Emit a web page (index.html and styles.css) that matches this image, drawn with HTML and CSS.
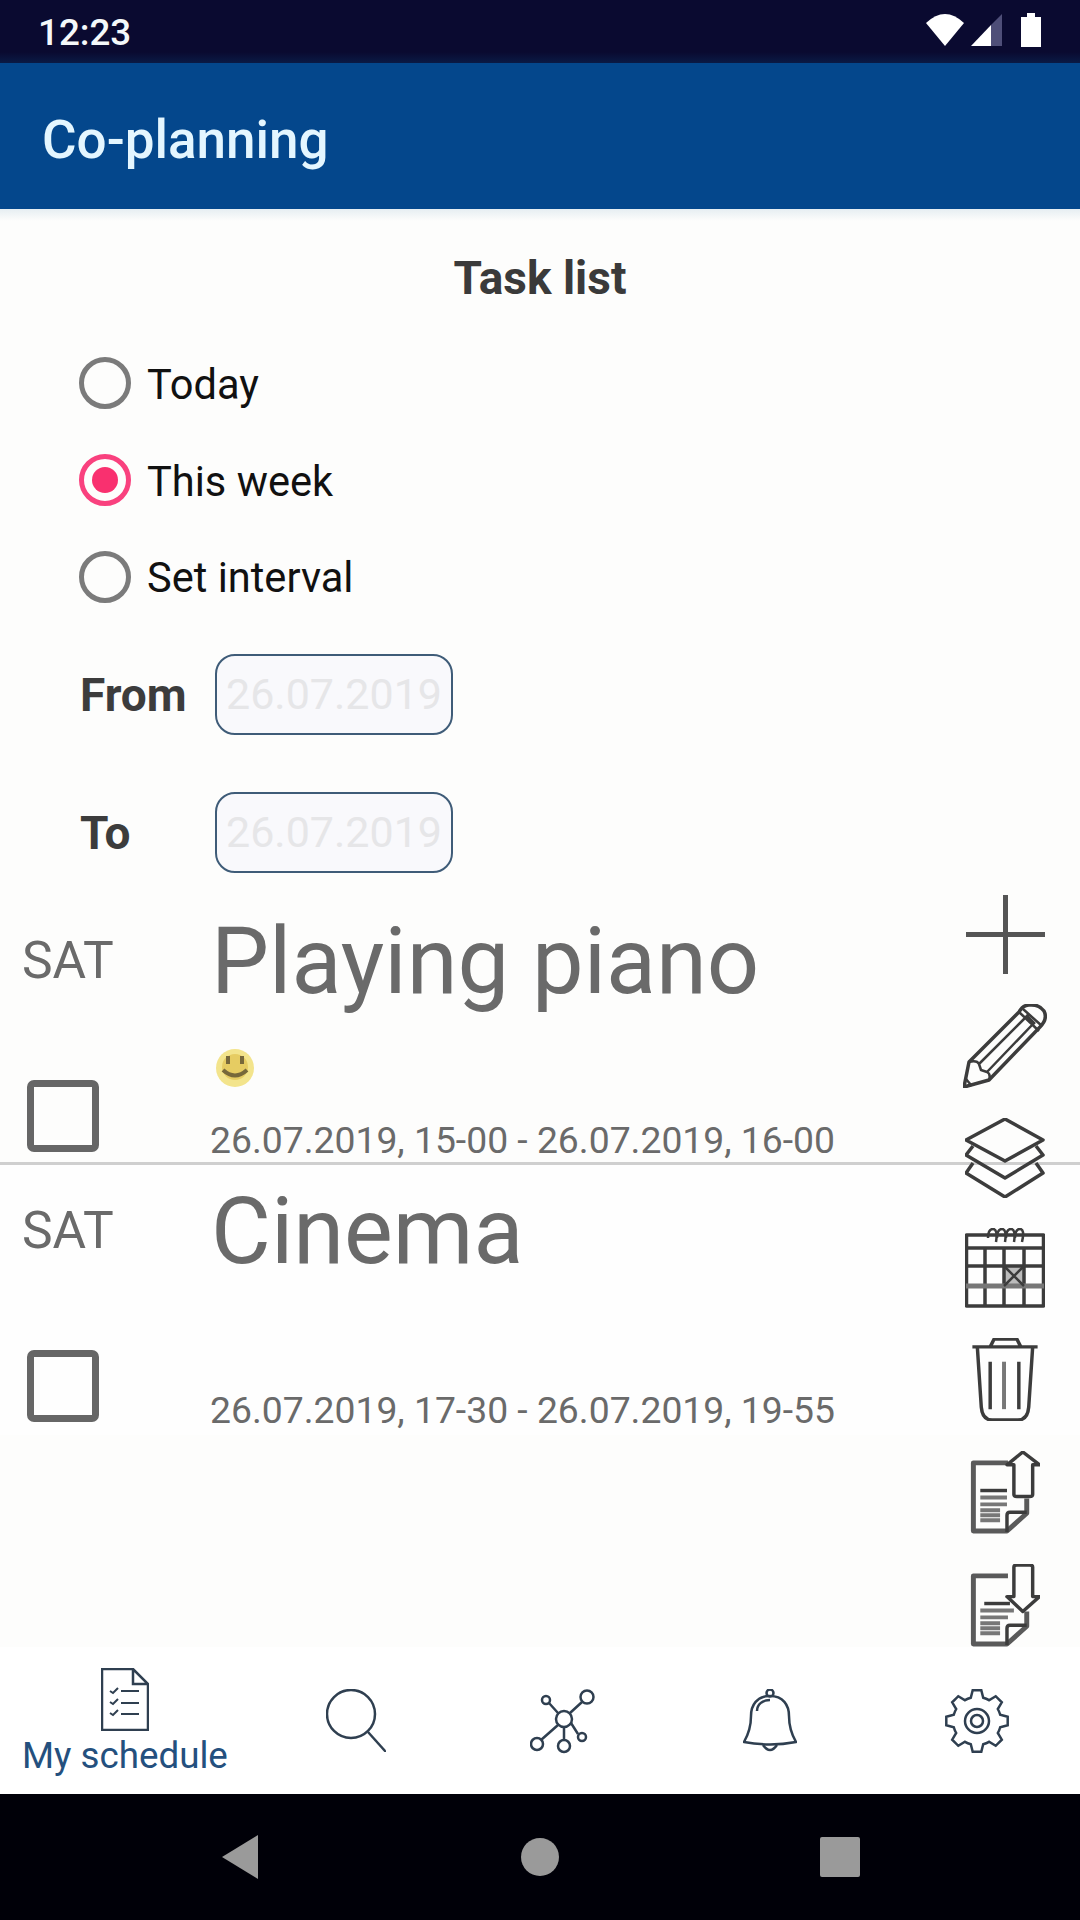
FILE: index.html
```html
<!DOCTYPE html>
<html lang="en">
<head>
 <meta charset="utf-8"/>
 <title>Co-planning</title>
 <link rel="stylesheet" href="styles.css">
</head>
<body>

<header class="statusbar">
 <span class="clock">12:23</span>
 <div class="status-icons">
  <svg class="ic-wifi" viewBox="0 0 38 32"><path d="M19 32 L0 9 Q19 -9 38 9 Z"/></svg>
  <svg class="ic-signal" viewBox="0 0 31 32"><path class="dim" d="M31 0 V32 H20 V11 Z"/><path d="M20 11 V32 H0 Z"/></svg>
  <svg class="ic-battery" viewBox="0 0 20 34"><path d="M6 0 H14 V4 H20 V34 H0 V4 H6 Z"/></svg>
 </div>
</header>

<div class="appbar">Co-planning</div>

<main class="page">
 <h2 class="page-title">Task list</h2>

 <div class="radios">
  <div class="radio-row"><span class="radio"></span><span>Today</span></div>
  <div class="radio-row"><span class="radio checked"></span><span>This week</span></div>
  <div class="radio-row"><span class="radio"></span><span>Set interval</span></div>
 </div>

 <div class="dates">
  <div class="date-row"><span class="date-label">From</span><div class="date-field">26.07.2019</div></div>
  <div class="date-row"><span class="date-label">To</span><div class="date-field">26.07.2019</div></div>
 </div>

 <div class="tasks">
  <div class="task divided">
   <div class="task-side">
    <span class="day">SAT</span>
    <span class="check"></span>
   </div>
   <div class="task-body">
    <div class="task-title">Playing piano</div>
    <svg class="smiley" viewBox="0 0 40 40">
     <circle cx="20" cy="20" r="19" fill="#f3e48c"/>
     <circle cx="20" cy="19" r="13" fill="#e6cc62"/>
     <path d="M13 8 V16 M27 8 V16" stroke="#77683a" stroke-width="4" fill="none"/>
     <path d="M8 22 Q20 33 32 22" stroke="#77683a" stroke-width="4" fill="none"/>
    </svg>
    <div class="task-time">26.07.2019, 15-00 - 26.07.2019, 16-00</div>
   </div>
  </div>
  <div class="task">
   <div class="task-side">
    <span class="day">SAT</span>
    <span class="check"></span>
   </div>
   <div class="task-body">
    <div class="task-title">Cinema</div>
    <div class="task-time">26.07.2019, 17-30 - 26.07.2019, 19-55</div>
   </div>
  </div>
 </div>

 <div class="tools">
  <svg class="t-plus" viewBox="0 0 79 79"><path d="M39.5 0 V79 M0 39.5 H79"/></svg>
  <svg class="t-pencil" viewBox="0 0 84 84">
   <path d="M1 83 L6 58 L56 8 Q60 1 66 1 Q76 0 81 7 Q85 15 77 23 L26 76 Z"/>
   <path class="thin" d="M56 8 L76 27 M60 5 L79 22 M63 11 L72 20 M6 58 Q14 56 16 60 L18 66 L24 68 Q28 70 26 76 M16 60 L62 14 M24 68 L70 20 M1 83 L8 81 L3 75"/>
  </svg>
  <svg class="t-layers" viewBox="0 0 80 80">
   <path d="M40 1 L78 22 L40 43 L1 22 Z"/>
   <path d="M8 28 L1 37 L40 60 L78 37 L71 28"/>
   <path d="M8 45 L1 55 L40 79 L78 55 L71 45"/>
  </svg>
  <svg class="t-calendar" viewBox="0 0 80 80">
   <path class="cell" d="M39 38 H59 V58 H39 Z"/>
   <rect x="1.5" y="7" width="77" height="71"/>
   <path d="M1 20 H79 M1 38 H79 M20 20 V79 M39 20 V79 M59 20 V79"/>
   <path class="thick" d="M1 58 H79"/>
   <path class="thin" d="M39 38 L59 58 M59 38 L39 58"/>
   <path class="thin" d="M23 10 Q23 1 28 1 Q33 1 31 14 M32 10 Q32 1 37 1 Q42 1 40 14 M41 10 Q41 1 46 1 Q51 1 49 14 M50 10 Q50 1 55 1 Q60 1 57 14"/>
  </svg>
  <svg class="t-trash" viewBox="0 0 66 84">
   <path d="M18 9 L22 1 H45 L49 9 M0 9 H66"/>
   <path d="M5 9 L9 70 Q10 83 20 83 H46 Q56 83 57 70 L61 9"/>
   <path d="M18 24 V72 M47 24 V72"/>
   <path class="grey" d="M32 24 V72"/>
  </svg>
  <svg class="t-doc" viewBox="0 0 70 84">
   <path class="wide" d="M38 12 H3 V81 H37 L57 63 V48"/>
   <path d="M37 82 V65 Q37 62 40 62 H57"/>
   <path d="M10 40 H37"/>
   <path class="grey" d="M10 47 H37 M10 54 H37 M10 60 H30 M10 65 H30 M10 70 H30"/>
   <path d="M44 44 V14 H37 L53 1 L70 14 H63 V44 Q63 46 60 46 H47 Q44 46 44 44 Z"/>
  </svg>
  <svg class="t-doc" viewBox="0 0 70 84">
   <path class="wide" d="M38 12 H3 V81 H37 L57 63 V48"/>
   <path d="M37 82 V65 Q37 62 40 62 H57"/>
   <path d="M14 40 H40"/>
   <path class="grey" d="M10 47 H44 M10 54 H38 M10 60 H30 M10 65 H30 M10 70 H30"/>
   <path d="M44 3 Q44 1 47 1 H60 Q63 1 63 3 V33 H70 L53 48 L37 33 H44 Z"/>
  </svg>
 </div>
</main>

<nav class="bottomnav">
 <div class="nav-item active">
  <svg class="n-doc" viewBox="0 0 48 63">
   <path d="M1 1 H32 L47 16 V62 H1 Z M32 1 V16 H47"/>
   <path class="fine" d="M9 23 L12 25 L17 20 M20 23 H38 M9 34 L12 36 L17 31 M20 35 H38 M9 45 L12 47 L17 42 M20 46 H38"/>
  </svg>
  <span class="nav-label">My schedule</span>
 </div>
 <div class="nav-item">
  <svg class="n-search" viewBox="0 0 60 63"><circle cx="25" cy="25" r="24"/><path d="M42 43 L60 63"/></svg>
 </div>
 <div class="nav-item">
  <svg class="n-net" viewBox="0 0 66 66">
   <circle cx="34" cy="30" r="8"/><circle cx="57" cy="8" r="6.5"/><circle cx="16" cy="11" r="4"/>
   <circle cx="52" cy="48" r="4"/><circle cx="34" cy="57" r="6"/><circle cx="7" cy="55" r="6"/>
   <path d="M40 24 L52 13 M28 24 L19 14 M41 34 L48 45 M34 38 V51 M28 36 L11 51"/>
  </svg>
 </div>
 <div class="nav-item">
  <svg class="n-bell" viewBox="0 0 54 63">
   <circle cx="27" cy="4" r="3.5"/>
   <path d="M27 7 C14 7 8 16 8 27 C8 38 5 46 1 53 Q27 58 53 53 C49 46 46 38 46 27 C46 16 40 7 27 7 Z"/>
   <path d="M14 22 C14 15 20 11 27 11"/>
   <path d="M20 56 Q27 66 34 56"/>
  </svg>
 </div>
 <div class="nav-item">
  <svg class="n-gear" viewBox="0 0 64 64">
   <path d="M25.8 8.8 L27.7 1.3 H36.3 L38.2 8.8 A24 24 0 0 1 44 11.2 L50.7 7.2 L56.8 13.3 L52.8 20 A24 24 0 0 1 55.2 25.8 L62.7 27.7 V36.3 L55.2 38.2 A24 24 0 0 1 52.8 44 L56.8 50.7 L50.7 56.8 L44 52.8 A24 24 0 0 1 38.2 55.2 L36.3 62.7 H27.7 L25.8 55.2 A24 24 0 0 1 20 52.8 L13.3 56.8 L7.2 50.7 L11.2 44 A24 24 0 0 1 8.8 38.2 L1.3 36.3 V27.7 L8.8 25.8 A24 24 0 0 1 11.2 20 L7.2 13.3 L13.3 7.2 L20 11.2 A24 24 0 0 1 25.8 8.8 Z"/>
   <circle cx="32" cy="32" r="12"/><circle cx="32" cy="32" r="6"/>
  </svg>
 </div>
</nav>

<footer class="navbar">
 <svg viewBox="0 0 40 44"><path d="M38 0 V44 L2 22 Z"/></svg>
 <svg viewBox="0 0 40 44"><circle cx="20" cy="22" r="19"/></svg>
 <svg viewBox="0 0 40 44"><rect x="0" y="2" width="40" height="40" rx="2"/></svg>
</footer>

</body>
</html>
```

FILE: styles.css
```css
* { box-sizing: border-box; }
body {
  margin: 0;
  width: 1080px;
  height: 1920px;
  display: flex;
  flex-direction: column;
  overflow: hidden;
  font-family: Roboto, "Liberation Sans", sans-serif;
  background: #fdfdfc;
}

/* top bars */
.statusbar {
  height: 63px;
  flex: none;
  display: flex;
  justify-content: space-between;
  align-items: flex-start;
  padding: 13px 39px 0 38px;
  background: linear-gradient(#0a0a30 52px, #0a1a45);
  color: #f4f8fa;
}
.clock { font-size: 36.75px; font-weight: 500; line-height: 40px; }
.status-icons { display: flex; gap: 7px; margin-top: 1px; }
.status-icons svg { fill: #fff; display: block; }
.ic-wifi { width: 38px; height: 32px; }
.ic-signal { width: 31px; height: 32px; margin-right: 12px; }
.ic-signal .dim { fill: #4e4e78; }
.ic-battery { width: 20px; height: 34px; margin-top: -1px; }

.appbar {
  height: 146px;
  flex: none;
  padding: 47px 0 0 42px;
  background: #04478c;
  color: #e4f6ff;
  font-size: 53px;
  font-weight: 500;
  line-height: 60px;
}

/* page body */
.page {
  position: relative;
  flex: 1;
  background: linear-gradient(#e6eef2, #fdfdfc 12px);
}
.page-title {
  margin: 0;
  height: 126px;
  padding-top: 44px;
  text-align: center;
  font-size: 46px;
  font-weight: 700;
  line-height: 50px;
  color: #3a3a3a;
}

.radio-row {
  height: 96.7px;
  display: flex;
  align-items: center;
  gap: 17px;
  padding: 0 0 0 79px;
  font-size: 41.6px;
  color: #111;
}
.radio-row span:last-child { margin: 2px 0 0 -1px; }
.radio {
  width: 52px;
  height: 52px;
  border: 5px solid #7b7b7b;
  border-radius: 50%;
  display: flex;
  align-items: center;
  justify-content: center;
}
.radio.checked { border-color: #f9417e; }
.radio.checked::after {
  content: "";
  width: 26px;
  height: 26px;
  border-radius: 50%;
  background: #f9306f;
}

.dates {
  margin-top: 29px;
  display: flex;
  flex-direction: column;
  gap: 57px;
}
.date-row { display: flex; align-items: center; padding-left: 80px; }
.date-label {
  width: 135px;
  font-size: 46px;
  font-weight: 700;
  color: #3c3c3c;
}
.date-field {
  width: 238px;
  height: 81px;
  border: 2.5px solid #3f5c78;
  border-radius: 20px;
  background: #f9f9fc;
  color: #e6e6e8;
  font-size: 43px;
  line-height: 76px;
  text-align: center;
}

/* tasks */
.tasks { margin-top: 22px; }
.task {
  height: 270px;
  display: flex;
  color: #6a6a6a;
}
.task.divided { border-bottom: 3px solid #cfcfcf; }
.task + .task { background: #fefefe; }
.task-side {
  width: 210px;
  flex: none;
  display: flex;
  flex-direction: column;
  align-items: flex-start;
  padding: 42px 0 10px 22px;
}
.day { font-size: 51.5px; line-height: 48px; }
.check {
  width: 72px;
  height: 72px;
  margin: auto 0 0 5px;
  border: 7px solid #666;
  border-radius: 7px;
}
.task + .task .check { margin-bottom: 3px; }
.task-body {
  flex: 1;
  display: flex;
  flex-direction: column;
  align-items: flex-start;
  padding: 22px 0 1px 0;
}
.task-title { font-size: 92px; line-height: 90px; margin-left: 1px; }
.smiley { width: 40px; height: 40px; margin: 41px 0 0 5px; display: block; }
.task-time { margin-top: auto; font-size: 37.3px; line-height: 42px; }
.task + .task .task-body { padding-bottom: 4px; }

/* right hand tool icons, they float over the task rows */
.tools {
  position: absolute;
  top: 686px;
  right: 33px;
  width: 84px;
  display: flex;
  flex-direction: column;
  align-items: center;
  gap: 30px;
}
.tools svg {
  display: block;
  fill: none;
  stroke: #3c3c3c;
  stroke-width: 3.5;
  stroke-linejoin: round;
  filter: blur(.5px);
}
.tools .thin { stroke-width: 2.5; }
.tools .grey { stroke: #777; stroke-width: 4; }
.t-plus { width: 79px; height: 79px; }
.t-plus path { stroke: #555; stroke-width: 5; }
.t-pencil { width: 84px; height: 84px; }
.t-layers { width: 80px; height: 80px; }
.t-calendar { width: 80px; height: 80px; }
.t-calendar .thick { stroke: #777; stroke-width: 5; }
.t-calendar .cell { fill: #bbb; stroke: none; }
.t-trash { width: 66px; height: 83px; }
.t-doc { width: 70px; height: 83px; }
.t-doc .wide { stroke-width: 5; stroke: #5a5a5a; }

/* bottom navigation */
.bottomnav {
  height: 147px;
  flex: none;
  display: flex;
  background: #fff;
}
.nav-item {
  width: 207px;
  display: flex;
  flex-direction: column;
  align-items: center;
  padding-top: 42px;
}
.nav-item:nth-child(2) { margin-left: 3px; }
.nav-item.active { width: 250px; padding-top: 21px; }
.nav-item svg { display: block; fill: none; stroke: #2f3f50; stroke-width: 2.5; }
.nav-label {
  margin-top: 4px;
  font-size: 36.75px;
  line-height: 42px;
  color: #24507e;
}
.n-doc { width: 48px; height: 63px; }
.nav-item .n-doc .fine { stroke-width: 2; }
.n-search { width: 60px; height: 63px; }
.n-net { width: 66px; height: 66px; }
.n-bell { width: 54px; height: 63px; }
.n-gear { width: 64px; height: 64px; }

.navbar {
  height: 126px;
  flex: none;
  display: flex;
  justify-content: center;
  align-items: center;
  gap: 260px;
  background: #000008;
}
.navbar svg { width: 40px; height: 44px; fill: #9a9a9a; }
```
